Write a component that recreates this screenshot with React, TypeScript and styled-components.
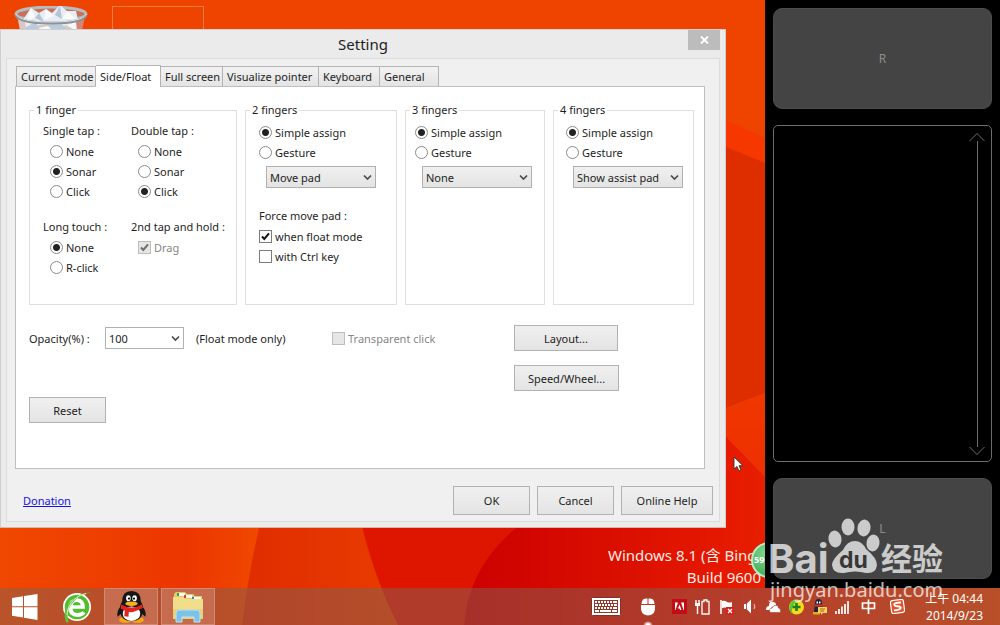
import React, { ReactNode, useState } from "react";
import styled, { createGlobalStyle, css } from "styled-components";

const GlobalStyle = createGlobalStyle`
  *, *::before, *::after { box-sizing: border-box; }
  body {
    margin: 0;
    font-family: "Noto Sans", "Noto Sans CJK SC", sans-serif;
    font-size: 11px;
    color: #1e1e1e;
  }
  button, select, input { font: inherit; color: inherit; margin: 0; }
`;

/* ---------- Desktop ---------- */

const Screen = styled.div`
  position: relative;
  display: flex;
  flex-direction: column;
  min-height: 100vh;
  overflow: hidden;
  background: #ee4400;
`;

const WallpaperSvg = styled.svg`
  position: absolute;
  inset: 0;
  width: 100%;
  height: 100%;
`;

const Workspace = styled.div`
  position: relative;
  flex: 1;
  display: flex;
`;

const Canvas = styled.main`
  position: relative;
  flex: 1;
  min-width: 0;
  display: flex;
  flex-direction: column;
  overflow: hidden;
`;

const IconStrip = styled.div`
  display: flex;
  gap: 24px;
  height: 29px;
  padding: 6px 14px 0;
  overflow: hidden;
`;

const SelectionBox = styled.div`
  width: 92px;
  height: 40px;
  border: 1px solid #f47a48;
`;

const BuildInfo = styled.div`
  margin-top: auto;
  padding-right: 4px;
  text-align: right;
  font-size: 15px;
  line-height: 22px;
  color: #ffe9e4;
`;

const SpeedBadge = styled.div`
  position: absolute;
  right: -22px;
  bottom: 10px;
  width: 36px;
  height: 36px;
  padding-left: 1px;
  border-radius: 50%;
  border: 2px solid #b8ecc0;
  background: radial-gradient(circle at 40% 30%, #7fd88c, #2fa04c);
  color: #fff;
  font-size: 9px;
  font-weight: 700;
  line-height: 32px;
`;

const Cursor = styled.svg`
  position: absolute;
  right: 21px;
  top: 456px;
`;

/* ---------- Touch pad dock ---------- */

const Dock = styled.aside`
  flex: 0 0 235px;
  display: flex;
  flex-direction: column;
  gap: 16px;
  padding: 8px 8px 9px;
  background: #000;
`;

const PadButton = styled.button`
  height: 101px;
  border: 1px solid #4c4c4c;
  border-radius: 9px;
  background: #444;
  font-size: 12px;
  color: #8c8c8c;
`;

const ScrollPad = styled.div`
  flex: 1;
  display: flex;
  justify-content: flex-end;
  padding: 7px 6px 6px 0;
  border: 1px solid #6c6c6c;
  border-radius: 5px;
`;

const ScrollTrack = styled.div`
  display: flex;
  flex-direction: column;
  align-items: center;
  width: 16px;
  svg { display: block; }
`;

const ScrollLine = styled.div`
  flex: 1;
  width: 1px;
  background: #6c6c6c;
`;

/* ---------- Dialog ---------- */

const Dialog = styled.section`
  display: flex;
  flex-direction: column;
  margin-right: 39px;
  padding: 0 5px 5px;
  border: 1px solid #cfcfcf;
  border-bottom-color: #d8b8a8;
  background: #ebebeb;
`;

const TitleBar = styled.header`
  display: grid;
  grid-template-columns: 32px 1fr 32px;
  height: 28px;
`;

const Title = styled.h1`
  grid-column: 2;
  margin: 0;
  text-align: center;
  font-size: 15px;
  font-weight: 400;
  line-height: 28px;
`;

const CloseButton = styled.button`
  display: flex;
  align-items: center;
  justify-content: center;
  height: 20px;
  padding: 0;
  border: 0;
  background: #bcbcbc;
`;

const Client = styled.div`
  padding: 6px 14px 6px 8px;
  border: 1px solid #dcdcdc;
  background: #f0f0f0;
`;

const TabList = styled.div`
  display: flex;
  align-items: flex-end;
  height: 21px;
  margin-left: 1px;
`;

const Tab = styled.button<{ $width: number; $active?: boolean }>`
  flex: 0 0 ${(p) => p.$width}px;
  height: 20px;
  padding: 0 0 0 4px;
  border: 1px solid #b4b4b4;
  border-width: 1px 1px 0 0;
  background: linear-gradient(#f2f2f2, #e4e4e4);
  text-align: left;
  white-space: nowrap;
  line-height: 20px;
  &:first-child { border-left-width: 1px; }
  ${(p) =>
    p.$active &&
    css`
      position: relative;
      height: 22px;
      margin-bottom: -1px;
      background: #fff;
    `}
`;

const Panel = styled.div`
  padding: 13px 10px 45px 13px;
  border: 1px solid #bfbfbf;
  background: #fff;
`;

const Groups = styled.div`
  display: grid;
  grid-template-columns: 208fr 152fr 140fr 141fr;
  gap: 8px;
`;

const Fieldset = styled.fieldset`
  min-width: 0;
  min-height: 205px;
  margin: 0;
  padding: 0;
  border: 1px solid #dfdfdf;
`;

const Legend = styled.legend`
  margin-left: 4px;
  padding: 0 2px;
  line-height: 20px;
`;

const GroupBody = styled.div<{ $inset: number }>`
  display: flex;
  flex-direction: column;
  align-items: flex-start;
  padding: 2px 0 0 ${(p) => p.$inset}px;
`;

const TapGrid = styled.div`
  display: grid;
  grid-template-columns: 88px auto;
  row-gap: 16px;
  padding: 1px 0 0 13px;
`;

const Caption = styled.div`
  line-height: 20px;
  white-space: nowrap;
`;

const Options = styled.div`
  display: flex;
  flex-direction: column;
  align-items: flex-start;
  padding-left: 7px;
`;

const ForceBlock = styled.div`
  margin-top: 18px;
`;

const OptionLabel = styled.label<{ $disabled?: boolean }>`
  display: flex;
  align-items: center;
  gap: 3px;
  height: 20px;
  white-space: nowrap;
  color: ${(p) => (p.$disabled ? "#868686" : "inherit")};
`;

const RadioInput = styled.input`
  appearance: none;
  width: 13px;
  height: 13px;
  border: 1px solid #8a8a8a;
  border-radius: 50%;
  background: #fff;
  &:checked {
    background: radial-gradient(circle, #222 0 3px, #fff 4px);
  }
`;

const CheckInput = styled.input`
  appearance: none;
  width: 13px;
  height: 13px;
  border: 1px solid #7c7c7c;
  background: #fff;
  &:disabled {
    border-color: #bdbdbd;
    background: #e6e6e6;
  }
`;

const CheckBox = styled.span`
  position: relative;
  display: flex;
  svg {
    position: absolute;
    inset: 0;
    pointer-events: none;
  }
`;

const SelectWrap = styled.div<{ $width: number; $plain?: boolean }>`
  position: relative;
  width: ${(p) => p.$width}px;
  select {
    appearance: none;
    display: block;
    width: 100%;
    height: 22px;
    padding: 0 18px 0 3px;
    border: 1px solid #b0b0b0;
    border-radius: 0;
    background: ${(p) => (p.$plain ? "#fff" : "linear-gradient(#f0f0f0, #e3e3e3)")};
  }
  svg {
    position: absolute;
    right: 4px;
    top: 8px;
    pointer-events: none;
  }
`;

const AssignSelect = styled.div`
  margin: 4px 0 0 7px;
`;

const PushButton = styled.button<{ $width: number; $tall?: boolean }>`
  width: ${(p) => p.$width}px;
  height: ${(p) => (p.$tall ? 29 : 26)}px;
  padding: 0;
  border: 1px solid #b2b2b2;
  background: linear-gradient(#f0f0f0, #e4e4e4);
`;

const LowerArea = styled.div`
  display: flex;
  margin-top: 20px;
`;

const LowerLeft = styled.div`
  display: flex;
  flex-direction: column;
  align-items: flex-start;
  gap: 46px;
  flex: 0 1 485px;
`;

const OpacityRow = styled.div`
  display: flex;
  align-items: center;
  height: 26px;
  white-space: nowrap;
`;

const OpacityLabel = styled.label`
  width: 76px;
`;

const OpacityNote = styled.span`
  width: 136px;
  margin-left: 12px;
`;

const LowerRight = styled.div`
  display: flex;
  flex-direction: column;
  gap: 14px;
`;

const DialogFooter = styled.footer`
  display: flex;
  align-items: center;
  gap: 7px;
  margin: 17px -8px 0 8px;
`;

const DonationLink = styled.a`
  margin-right: auto;
  color: #1414e6;
  text-decoration: underline;
`;

/* ---------- Task bar ---------- */

const TaskBar = styled.nav`
  position: relative;
  display: flex;
  align-items: stretch;
  height: 37px;
  background: rgba(130, 96, 84, 0.5);
`;

const TaskButton = styled.button<{ $open?: boolean }>`
  display: flex;
  align-items: center;
  justify-content: center;
  width: ${(p) => (p.$open ? 54 : 50)}px;
  margin-right: ${(p) => (p.$open ? 3 : 2)}px;
  padding: 0;
  border: 1px solid ${(p) => (p.$open ? "#d08a74" : "transparent")};
  background: ${(p) => (p.$open ? "rgba(255, 220, 210, 0.22)" : "transparent")};
`;

const Tray = styled.div`
  display: flex;
  align-items: center;
  gap: 8px;
  margin-left: auto;
  padding-right: 17px;
`;

const TrayGroup = styled.div<{ $gap: number; $after: number }>`
  display: flex;
  align-items: center;
  gap: ${(p) => p.$gap}px;
  margin-right: ${(p) => p.$after}px;
  svg { display: block; }
`;

const PointerStatus = styled.span`
  position: relative;
  &::after {
    content: "";
    position: absolute;
    left: 3px;
    top: 23px;
    width: 10px;
    height: 8px;
    border-radius: 50%;
    background: radial-gradient(closest-side, #fff 30%, rgba(255, 255, 255, 0));
  }
`;

const Clock = styled.time`
  width: 60px;
  text-align: right;
  white-space: nowrap;
  font-size: 12px;
  line-height: 17px;
  color: #fff;
`;

const Watermark = styled.svg`
  position: absolute;
  right: 46px;
  bottom: 18px;
  pointer-events: none;
`;

/* ---------- Drawings ---------- */

const Wallpaper = () => (
  <WallpaperSvg viewBox="0 0 1000 625" preserveAspectRatio="none" aria-hidden="true">
    <defs>
      <linearGradient id="wpA" x1="0" x2="1">
        <stop offset="0" stopColor="#f04800" />
        <stop offset="0.7" stopColor="#ec3600" />
        <stop offset="1" stopColor="#f04a00" />
      </linearGradient>
      <linearGradient id="wpB" x1="0" x2="1">
        <stop offset="0" stopColor="#e02c00" />
        <stop offset="1" stopColor="#e83c00" />
      </linearGradient>
      <linearGradient id="wpC" x1="0" x2="1">
        <stop offset="0" stopColor="#cc0000" />
        <stop offset="0.5" stopColor="#e61a00" />
        <stop offset="1" stopColor="#ee4000" />
      </linearGradient>
      <linearGradient id="wpD" x1="0" x2="0" y1="0" y2="1">
        <stop offset="0" stopColor="#f44200" />
        <stop offset="1" stopColor="#e81e00" />
      </linearGradient>
    </defs>
    <rect width="1000" height="625" fill="#ee4400" />
    <path d="M700 108 L765 138 L765 163 L700 136 Z" fill="#f63800" />
    <path d="M700 136 L765 163 L1000 260 L1000 420 L765 393 L700 418 Z" fill="#de2e00" />
    <path d="M700 418 L765 393 L1000 300 L1000 625 L700 625 Z" fill="url(#wpD)" />
    <path d="M0 500 H266 Q250 560 242 625 H0 Z" fill="url(#wpA)" />
    <path d="M266 500 H356 Q370 570 398 625 H242 Q250 560 266 500 Z" fill="url(#wpB)" />
    <path d="M356 500 H700 V625 H398 Q370 570 356 500 Z" fill="#de1600" />
    <path d="M560 500 Q470 545 464 625 H1000 L1000 560 L765 477 L700 410 L700 500 Z" fill="url(#wpC)" />
  </WallpaperSvg>
);

const RecycleBin = () => (
  <svg width="74" height="40" viewBox="0 0 74 40" aria-hidden="true">
    <path d="M3 9 L9 40 H65 L71 9 Z" fill="#d5e0e8" opacity="0.85" />
    <path d="M62 9 h9 l-4 24 h-5 Z" fill="#d4674b" opacity="0.7" />
    <ellipse cx="37" cy="8" rx="35" ry="7" fill="#c8705a" stroke="#b7bcc0" strokeWidth="3" />
    <path d="M10 12 L17 2 L25 7 L32 3 L38 7 L46 -1 L53 5 L62 5 L64 14 L50 20 L32 18 L12 22 Z" fill="#e6edf4" />
    <path d="M17 2 L21 11 L12 15 Z M32 3 L40 10 L30 14 Z M53 5 L48 13 L62 13 Z" fill="#f8fafc" />
    <path d="M25 7 L21 12 L30 16 Z M46 0 L41 9 L48 13 Z" fill="#b4c4d4" />
    <path d="M11 22 l10 -6 l8 10 l-9 10 Z M32 20 l14 -4 l8 9 l-11 9 Z" fill="#bccbdc" />
    <path d="M25 22 l9 -2 l7 7 l-12 5 Z M52 19 l10 -3 l1 9 Z" fill="#f7fafc" />
    <path d="M2 9 Q5 17 37 17 Q69 17 72 9" fill="none" stroke="#8d9296" strokeWidth="3" />
    <path d="M2 8 Q5 16 37 16 Q69 16 72 8" fill="none" stroke="#e2e4e5" strokeWidth="1" />
  </svg>
);

const Chevron = () => (
  <svg width="9" height="7" viewBox="0 0 9 7" aria-hidden="true">
    <path d="M1 1.5 L4.5 5 L8 1.5" fill="none" stroke="#4c4c4c" strokeWidth="1.7" />
  </svg>
);

const StartIcon = () => (
  <svg width="26" height="26" viewBox="0 0 26 26" aria-hidden="true">
    <path d="M0 4 L11 2.2 V12.3 H0 Z M12 2 L25.500 0 V12.300 H12 Z M0 13.300 H11 V23.500 L0 21.800 Z M12 13.300 H25.500 V26 L12 23.700 Z" fill="#fff" />
  </svg>
);

const BrowserIcon = () => (
  <svg width="30" height="32" viewBox="0 0 30 32" aria-hidden="true">
    <circle cx="15" cy="16" r="14" fill="#fff" />
    <circle cx="15" cy="16" r="12.300" fill="#53bb2e" />
    <path d="M23 17.800 H10.500 Q11 22 15.500 22 Q18.500 22 20.500 20.200 L23.500 22.200 Q20.500 26 15.500 26 Q6 25.500 6 16.500 Q6.500 7.500 15 7.300 Q23.500 7.800 23 17.800 Z M10.600 14.300 H18.700 Q18 11 14.800 11 Q11.500 11 10.600 14.300 Z" fill="#fff" fillRule="evenodd" />
    <path d="M4 31.500 Q0 21 7 12 Q16 1 29 1.500 Q15 4 9 14 Q3 22 7 31 Z" fill="#5cc335" />
    <path d="M5 24 Q5 16 12 8.500 Q18 3.500 24 2.500" fill="none" stroke="#fff" strokeWidth="0.800" />
  </svg>
);

const Penguin = ({ size }: { size: number }) => (
  <svg width={size} height={size + 1} viewBox="0 0 30 31" aria-hidden="true">
    <path d="M5 14 Q0 20 1.500 25 L5 22 Z M25 14 Q30 20 28.500 25 L25 22 Z" fill="#161616" />
    <ellipse cx="9" cy="28" rx="6" ry="2.800" fill="#f8a710" />
    <ellipse cx="21" cy="28" rx="6" ry="2.800" fill="#f8a710" />
    <path d="M15 0 Q24 0 24 10 Q27 15 26 20 Q25 29 15 29 Q5 29 4 20 Q3 15 6 10 Q6 0 15 0" fill="#161616" />
    <ellipse cx="15" cy="22" rx="8.500" ry="7" fill="#fff" />
    <ellipse cx="12" cy="7" rx="2.200" ry="3" fill="#fff" />
    <ellipse cx="18" cy="7" rx="2.200" ry="3" fill="#fff" />
    <circle cx="12.600" cy="7.300" r="1.100" />
    <circle cx="17.400" cy="7.300" r="1.100" />
    <ellipse cx="15" cy="12.300" rx="6" ry="2.200" fill="#f8b020" />
    <path d="M5 13 Q15 19 25 13 L26 16.500 Q15 22 12.500 20 L12 25 L8 24.500 L8.500 19 L4.500 17 Z" fill="#e0261c" />
  </svg>
);

const FolderIcon = () => (
  <svg width="32" height="32" viewBox="0 0 32 32" aria-hidden="true">
    <path d="M2 3 L4 1 H13 L15 3 H21 L23 5 H30 V12 H2 Z" fill="#e5ca6c" />
    <path d="M5 2 h8 v3 h-8 Z M12 4 h8 v3 h-8 Z M20 6 h9 v2 h-9 Z" fill="#fbfbf6" />
    <path d="M5 2 h2 v3 h-2 Z" fill="#38a24c" />
    <path d="M12 4 h2 v3 h-2 Z" fill="#d7472c" />
    <path d="M20 6 h2 v2 h-2 Z" fill="#2e7dd1" />
    <path d="M1 6 H11 L13 8 H31 V28 H1 Z" fill="#f1dd8a" />
    <path d="M1 18 H31 V28 H1 Z" fill="#e8d074" />
    <path d="M4 31 V22 Q4 19 7 19 H25 Q28 19 28 22 V31 H22 V26 H10 V31 Z" fill="#7cc3ea" stroke="#bfe3f6" />
  </svg>
);

const KeyboardIcon = () => (
  <svg width="30" height="19" viewBox="0 0 30 19" aria-hidden="true">
    <rect x="0.500" y="0.500" width="29" height="18" rx="1" fill="#fff" stroke="#7c3426" />
    <rect x="3" y="3" width="24" height="13" fill="#8e3a2a" />
    <path d="M4 4h2v2h-2z M7 4h2v2h-2z M10 4h2v2h-2z M13 4h2v2h-2z M16 4h2v2h-2z M19 4h2v2h-2z M22 4h4v2h-4z M4 7h3v2h-3z M8 7h2v2h-2z M11 7h2v2h-2z M14 7h2v2h-2z M17 7h2v2h-2z M20 7h2v2h-2z M23 7h3v2h-3z M4 10h2v2h-2z M7 10h2v2h-2z M10 10h2v2h-2z M13 10h2v2h-2z M16 10h2v2h-2z M19 10h2v2h-2z M22 10h4v2h-4z M4 13h4v2h-4z M9 13h11v2h-11z M21 13h5v2h-5z" fill="#fff" />
  </svg>
);

const MouseIcon = () => (
  <svg width="16" height="18" viewBox="0 0 16 18" aria-hidden="true">
    <path d="M3 1.500 Q5 0 7.500 0.500 V6 H1.500 Q1.500 3 3 1.500 Z M8.500 0.500 Q11 0 13 1.500 Q14.500 3 14.500 6 H8.500 Z" fill="#fff" />
    <path d="M1 7 H15 Q16 17.500 8 17.500 Q0 17.500 1 7 Z" fill="#fff" />
  </svg>
);

const AdobeIcon = () => (
  <svg width="15" height="15" viewBox="0 0 15 15" aria-hidden="true">
    <rect width="15" height="15" fill="#c40d12" />
    <path d="M3 11 V3.500 H6 L3.500 11 Z M12 11 V3.500 H9 L11.500 11 Z M7.500 5.500 L9.500 11 H8 L7.500 9.500 H6 Z" fill="#fff" />
  </svg>
);

const BatteryIcon = () => (
  <svg width="15" height="16" viewBox="0 0 15 16" aria-hidden="true">
    <path d="M1 1 V4 M4 1 V4 M2.500 6 V15" stroke="#fff" strokeWidth="1.400" />
    <path d="M0 4 H5 V7 H0 Z" fill="#fff" />
    <path d="M9 1 H12 V2.500 H14 V15 H7 V2.500 H9 Z" fill="none" stroke="#fff" strokeWidth="1.300" />
  </svg>
);

const FlagIcon = () => (
  <svg width="17" height="16" viewBox="0 0 17 16" aria-hidden="true">
    <path d="M3 1 V15" stroke="#fff" strokeWidth="1.600" />
    <path d="M4 2 Q7 1 9 3 Q11 4 14 3 V9 Q11 10 9 9 Q7 8 4 9 Z" fill="#fff" />
    <rect x="8" y="8" width="8" height="8" fill="#d81f1f" />
    <path d="M10 10 L14 14 M14 10 L10 14" stroke="#fff" strokeWidth="1.300" />
  </svg>
);

const SpeakerIcon = () => (
  <svg width="15" height="15" viewBox="0 0 15 15" aria-hidden="true">
    <path d="M1 5 H3.500 L8 0.500 V14.500 L3.500 10 H1 Z" fill="#fff" />
    <path d="M3.500 5 V10" stroke="#8c3c2c" strokeWidth="0.800" />
    <path d="M11 5 Q12.500 7.500 11 10" fill="none" stroke="#e2b0a2" strokeWidth="1.200" />
  </svg>
);

const CloudIcon = () => (
  <svg width="15" height="12" viewBox="0 0 15 12" aria-hidden="true">
    <path d="M0 9 Q0 5 3 5 Q3 0 7 1 Q10 1 10 4 L6 6 L4 9 Z" fill="#fff" />
    <path d="M4 11.500 Q2.500 7.500 6 7 Q7.500 3.500 11 4.500 Q12.500 5 12.500 7 Q15.500 8 14.500 11.500 Z" fill="#fff" stroke="#a24430" strokeWidth="0.600" />
  </svg>
);

const GuardIcon = () => (
  <svg width="15" height="16" viewBox="0 0 15 16" aria-hidden="true">
    <circle cx="7.500" cy="8" r="7.500" fill="#f7d91c" />
    <path d="M0.500 6 Q3 0 10 1 Q6 3 4 7 Q2 12 4 14.500 Q-1 12 0.500 6 Z" fill="#5fc62f" />
    <path d="M7.500 4 V12 M3.500 8 H11.500" stroke="#168323" strokeWidth="2.600" />
  </svg>
);

const MessengerIcon = () => (
  <svg width="15" height="16" viewBox="0 0 15 16" aria-hidden="true">
    <path d="M3 5 Q3 0 6.500 0 Q10 0 10 5 L11 13 H2 Z" fill="#1b2440" />
    <path d="M4.500 2.500 h1.500 v2 h-1.500 Z M7 2.500 h1.500 v2 h-1.500 Z" fill="#fff" />
    <path d="M3 5.500 h7 v2 h-7 Z" fill="#e33322" />
    <path d="M1 13 h7 v2.500 h-7 Z" fill="#f5a318" />
    <path d="M6 8 H15 V14 H11 L9 16 V14 H6 Z" fill="#f8d25c" />
    <path d="M8 10 H13 M8 12 H12" stroke="#a86c18" />
  </svg>
);

const SignalIcon = () => (
  <svg width="15" height="14" viewBox="0 0 15 14" aria-hidden="true">
    <path d="M1 14 V11 M4 14 V9 M7 14 V6.500 M10 14 V4 M13 14 V1" stroke="#fff" strokeWidth="1.700" />
  </svg>
);

const ImeIcon = () => (
  <svg width="15" height="15" viewBox="0 0 15 15" aria-hidden="true">
    <path d="M1.500 4 H13.500 V9.500 H1.500 Z M7.500 0.500 V15" fill="none" stroke="#fff" strokeWidth="1.700" />
  </svg>
);

const SogouIcon = () => (
  <svg width="15" height="15" viewBox="0 0 15 15" aria-hidden="true">
    <g transform="rotate(-8 7.500 7.500)">
      <rect x="1" y="1" width="13" height="13" rx="2" fill="#e8502c" stroke="#fff" strokeWidth="1.200" />
      <path d="M11.500 4 Q4.500 3 4.500 5.300 Q4.500 6.800 7.500 7.200 Q10.500 7.800 10.500 9.300 Q10 11.300 3.500 10.800" fill="none" stroke="#fff" strokeWidth="1.900" />
    </g>
  </svg>
);

/* ---------- Controls ---------- */

const Radio = ({ name, label, checked }: { name: string; label: string; checked?: boolean }) => (
  <OptionLabel>
    <RadioInput type="radio" name={name} defaultChecked={checked} />
    {label}
  </OptionLabel>
);

const Check = ({ label, checked, disabled }: { label: string; checked?: boolean; disabled?: boolean }) => {
  const [on, setOn] = useState(!!checked);
  return (
    <OptionLabel $disabled={disabled}>
      <CheckBox>
        <CheckInput type="checkbox" checked={on} disabled={disabled} onChange={() => setOn(!on)} />
        {on && (
          <svg width="13" height="13" viewBox="0 0 13 13" aria-hidden="true">
            <path d="M3 6.500 L5.300 9 L10 3.300" fill="none" stroke={disabled ? "#6e6e6e" : "#161616"} strokeWidth="2" />
          </svg>
        )}
      </CheckBox>
      {label}
    </OptionLabel>
  );
};

const Dropdown = ({ id, value, width, plain, label }: { id: string; value: string; width: number; plain?: boolean; label?: string }) => (
  <SelectWrap $width={width} $plain={plain}>
    <select id={id} defaultValue={value} aria-label={label}>
      <option>{value}</option>
    </select>
    <Chevron />
  </SelectWrap>
);

const TapOptions = ({ title, children }: { title: string; children: ReactNode }) => (
  <div>
    <Caption>{title}</Caption>
    <Options>{children}</Options>
  </div>
);

const FingerGroup = ({ count, value, inset, children }: { count: number; value: string; inset: number; children?: ReactNode }) => (
  <Fieldset>
    <Legend>{count} fingers</Legend>
    <GroupBody $inset={inset}>
      <Radio name={`mode${count}`} label="Simple assign" checked />
      <Radio name={`mode${count}`} label="Gesture" />
      <AssignSelect>
        <Dropdown id={`assign${count}`} value={value} width={110} label={`${count} fingers`} />
      </AssignSelect>
      {children}
    </GroupBody>
  </Fieldset>
);

const tabs = [
  { name: "Current mode", width: 80 },
  { name: "Side/Float", width: 65 },
  { name: "Full screen", width: 62 },
  { name: "Visualize pointer", width: 96 },
  { name: "Keyboard", width: 61 },
  { name: "General", width: 59 },
];

const SettingDialog = () => (
  <Dialog role="dialog" aria-labelledby="dialog-title">
    <TitleBar>
      <Title id="dialog-title">Setting</Title>
      <CloseButton aria-label="Close">
        <svg width="9" height="8" viewBox="0 0 9 8" aria-hidden="true">
          <path d="M1 0.500 L8 7.500 M8 0.500 L1 7.500" stroke="#fff" strokeWidth="1.800" />
        </svg>
      </CloseButton>
    </TitleBar>
    <Client>
      <TabList role="tablist">
        {tabs.map((tab) => (
          <Tab key={tab.name} role="tab" $width={tab.width} $active={tab.name === "Side/Float"} aria-selected={tab.name === "Side/Float"}>
            {tab.name}
          </Tab>
        ))}
      </TabList>
      <Panel role="tabpanel">
        <Groups>
          <Fieldset>
            <Legend>1 finger</Legend>
            <TapGrid>
              <TapOptions title="Single tap :">
                <Radio name="single" label="None" />
                <Radio name="single" label="Sonar" checked />
                <Radio name="single" label="Click" />
              </TapOptions>
              <TapOptions title="Double tap :">
                <Radio name="double" label="None" />
                <Radio name="double" label="Sonar" />
                <Radio name="double" label="Click" checked />
              </TapOptions>
              <TapOptions title="Long touch :">
                <Radio name="long" label="None" checked />
                <Radio name="long" label="R-click" />
              </TapOptions>
              <TapOptions title="2nd tap and hold :">
                <Check label="Drag" checked disabled />
              </TapOptions>
            </TapGrid>
          </Fieldset>
          <FingerGroup count={2} value="Move pad" inset={13}>
            <ForceBlock>
              <Caption>Force move pad :</Caption>
              <Check label="when float mode" checked />
              <Check label="with Ctrl key" />
            </ForceBlock>
          </FingerGroup>
          <FingerGroup count={3} value="None" inset={9} />
          <FingerGroup count={4} value="Show assist pad" inset={12} />
        </Groups>
        <LowerArea>
          <LowerLeft>
            <OpacityRow>
              <OpacityLabel htmlFor="opacity">Opacity(%) :</OpacityLabel>
              <Dropdown id="opacity" value="100" width={79} plain />
              <OpacityNote>(Float mode only)</OpacityNote>
              <Check label="Transparent click" disabled />
            </OpacityRow>
            <PushButton $width={77}>Reset</PushButton>
          </LowerLeft>
          <LowerRight>
            <PushButton $width={104}>Layout...</PushButton>
            <PushButton $width={105}>Speed/Wheel...</PushButton>
          </LowerRight>
        </LowerArea>
      </Panel>
      <DialogFooter>
        <DonationLink href="#donation">Donation</DonationLink>
        <PushButton $width={77} $tall>OK</PushButton>
        <PushButton $width={77} $tall>Cancel</PushButton>
        <PushButton $width={92} $tall>Online Help</PushButton>
      </DialogFooter>
    </Client>
  </Dialog>
);

const TouchDock = () => (
  <Dock>
    <PadButton>R</PadButton>
    <ScrollPad>
      <ScrollTrack>
        <svg width="16" height="8" viewBox="0 0 16 8" aria-hidden="true">
          <path d="M0.500 8 L8 0.500 L15.500 8" fill="none" stroke="#6c6c6c" />
        </svg>
        <ScrollLine />
        <svg width="16" height="8" viewBox="0 0 16 8" aria-hidden="true">
          <path d="M0.500 0 L8 7.500 L15.500 0" fill="none" stroke="#6c6c6c" />
        </svg>
      </ScrollTrack>
    </ScrollPad>
    <PadButton>L</PadButton>
  </Dock>
);

const BaiduMark = () => (
  <Watermark width="186" height="92" viewBox="0 0 186 92" opacity="0.72">
    <g fill="#fff" fontFamily="Inter, sans-serif">
      <text x="0" y="58" fontSize="40" fontWeight="700">Bai</text>
      <ellipse cx="67" cy="24" rx="6.500" ry="8.500" transform="rotate(-10 67 24)" />
      <ellipse cx="80" cy="12" rx="6.500" ry="8.500" />
      <ellipse cx="96" cy="13" rx="6.500" ry="8.500" transform="rotate(10 96 13)" />
      <ellipse cx="105" cy="28" rx="6.500" ry="8.500" transform="rotate(10 105 28)" />
      <path d="M87 26 Q94 26 98 34 Q109 43 109 50 Q108 59 98 58 Q87 55 76 58 Q65 59 64 50 Q64 44 75 35 Q79 26 87 26 Z" />
      <text x="71" y="53" fontSize="23" fontWeight="700" fill="#333">du</text>
      <text x="113" y="55" fontSize="31" fontWeight="700" fontFamily="'Noto Sans CJK SC', sans-serif">经验</text>
      <text x="2" y="82" fontSize="20" fontFamily="'Noto Sans', sans-serif">jingyan.baidu.com</text>
    </g>
  </Watermark>
);

export default function App() {
  return (
    <>
      <GlobalStyle />
      <Screen>
        <Wallpaper />
        <Workspace>
          <Canvas>
            <IconStrip>
              <RecycleBin />
              <SelectionBox />
            </IconStrip>
            <SettingDialog />
            <BuildInfo>
              Windows 8.1 (含 Bing)
              <br />
              Build 9600
            </BuildInfo>
            <SpeedBadge>59</SpeedBadge>
            <Cursor width="11" height="16" viewBox="0 0 11 16" aria-hidden="true">
              <path d="M1 1 V13 L4 10.500 L6 15 L8 14 L6 9.700 H10 Z" fill="#fff" stroke="#333" strokeWidth="0.900" />
            </Cursor>
          </Canvas>
          <TouchDock />
        </Workspace>
        <TaskBar>
          <TaskButton aria-label="Start"><StartIcon /></TaskButton>
          <TaskButton aria-label="Browser"><BrowserIcon /></TaskButton>
          <TaskButton $open aria-label="QQ"><Penguin size={31} /></TaskButton>
          <TaskButton $open aria-label="File Explorer"><FolderIcon /></TaskButton>
          <Tray>
            <TrayGroup $gap={19} $after={8}>
              <KeyboardIcon />
              <PointerStatus><MouseIcon /></PointerStatus>
            </TrayGroup>
            <TrayGroup $gap={8} $after={3}>
              <AdobeIcon />
              <BatteryIcon />
              <FlagIcon />
              <SpeakerIcon />
              <CloudIcon />
              <GuardIcon />
              <MessengerIcon />
              <SignalIcon />
            </TrayGroup>
            <TrayGroup $gap={14} $after={10}>
              <ImeIcon />
              <SogouIcon />
            </TrayGroup>
            <Clock>
              上午 04:44
              <br />
              2014/9/23
            </Clock>
          </Tray>
        </TaskBar>
        <BaiduMark />
      </Screen>
    </>
  );
}
